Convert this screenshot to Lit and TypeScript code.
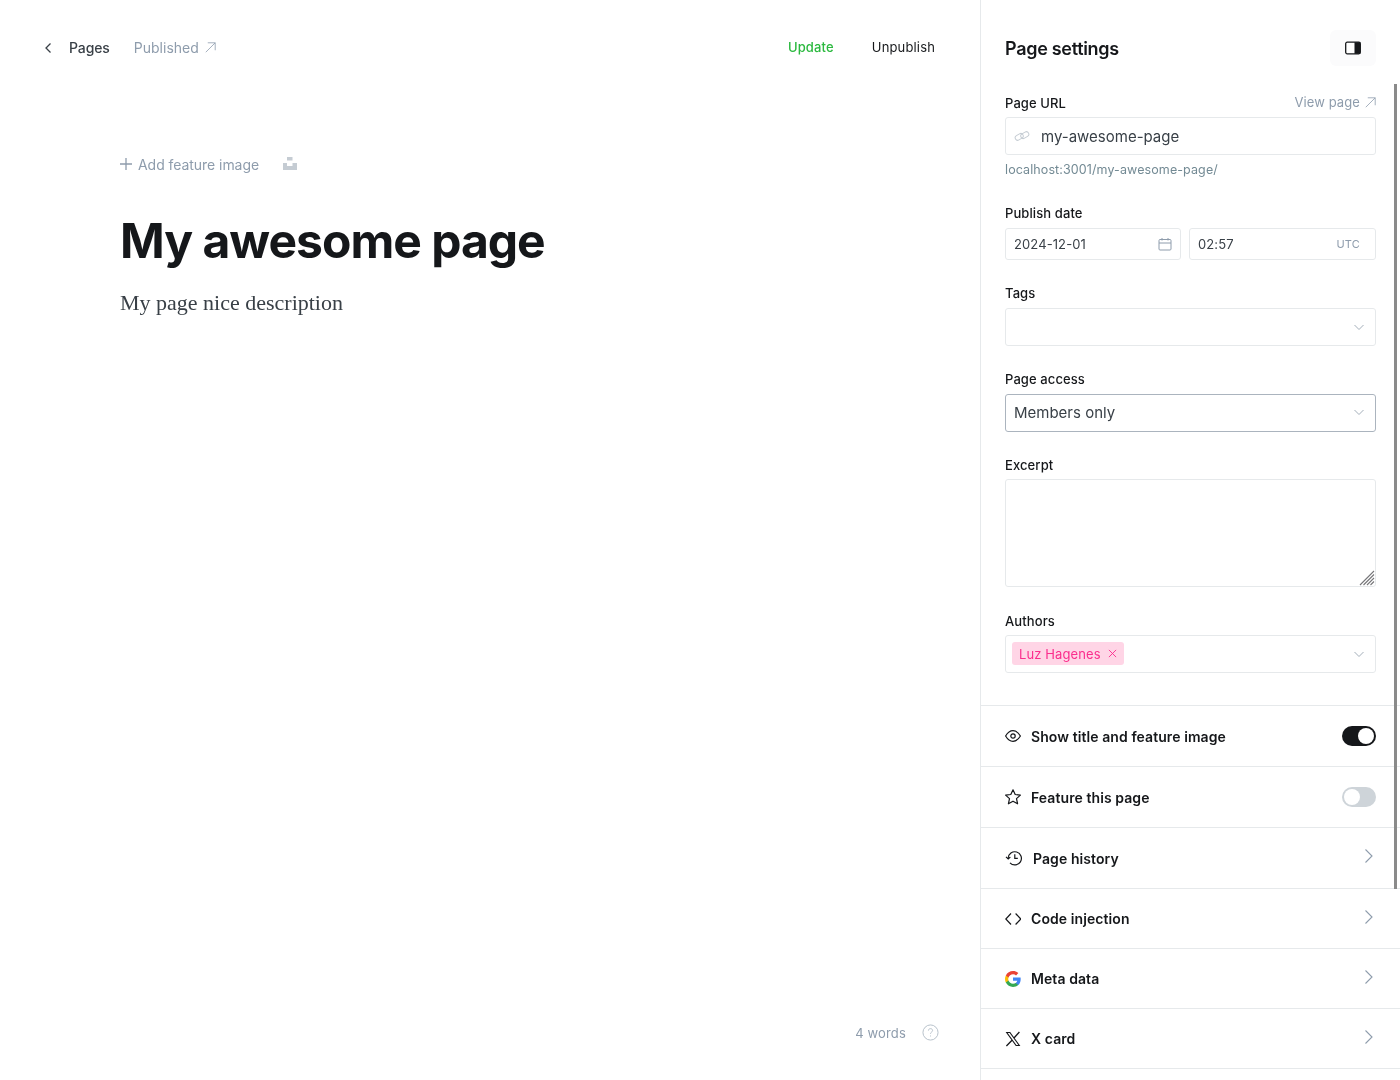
import { LitElement, css, html, svg } from 'lit';
import { customElement } from 'lit/decorators.js';

const arrowUpRight = svg`<path d="M1 13 L13 1 M3.5 1 H13 V10.5" fill="none" stroke="currentColor" stroke-width="1"/>`;
const chevronDown = html`<svg class="chev" viewBox="0 0 12 12" width="12" height="12"><path d="M1.5 4 L6 8.5 L10.5 4" fill="none" stroke="#a3aeb9" stroke-width="1"/></svg>`;
const chevronRight = html`<svg class="row-arrow" viewBox="0 0 10 16" width="10" height="16"><path d="M1.5 1.5 L8 8 L1.5 14.5" fill="none" stroke="#8e9cac" stroke-width="1.1"/></svg>`;

@customElement('app-root')
export class AppRoot extends LitElement {
  static styles = css`
:host {
  display: block;
  width: 1400px;
  height: 1080px;
  overflow: hidden;
  background: #fff;
  font-family: Inter, "Liberation Sans", sans-serif;
  color: #15171a;
}
.page {
  display: flex;
  height: 1080px;
  will-change: transform;
}
.editor {
  width: 980px;
  display: flex;
  flex-direction: column;
  position: relative;
}
.topbar {
  display: flex;
  align-items: center;
  height: 30px;
  margin-top: 32px;
  padding: 0 45px 0 44px;
  font-size: 14px;
}
.back {
  display: flex;
  align-items: center;
  color: #394047;
  font-weight: 500;
  gap: 17px;
  letter-spacing: -0.1px;
}
.back svg {
  margin-top: 1px;
}
.status {
  display: flex;
  align-items: center;
  color: #8e9cac;
  margin-left: 24px;
  gap: 6px;
}
.actions {
  margin-left: auto;
  display: flex;
  gap: 38px;
  font-size: 13px;
  letter-spacing: 0.15px;
}
.update {
  color: #2bb93f;
  font-weight: 500;
}
.unpublish {
  color: #15171a;
}
.content {
  padding: 0 120px;
}
.feature {
  display: flex;
  align-items: center;
  margin-top: 92px;
  height: 20px;
  color: #8e9cac;
  font-size: 14px;
  letter-spacing: -0.05px;
}
.feature .plus {
  margin-right: 6px;
}
.feature .unsplash {
  margin-left: 24px;
  margin-top: -1px;
}
h1 {
  margin: 37px 0 0;
  font-size: 48px;
  line-height: 60px;
  font-weight: 700;
  letter-spacing: -1px;
  color: #15171a;
}
.desc {
  margin: 17px 0 0;
  font-family: "Liberation Serif", serif;
  font-size: 22px;
  line-height: 30px;
  color: #394047;
}
.count {
  position: absolute;
  right: 41px;
  bottom: 39px;
  display: flex;
  align-items: center;
  gap: 16px;
  font-size: 13px;
  color: #8e9cac;
  letter-spacing: 0.15px;
}
.sidebar {
  width: 420px;
  box-sizing: border-box;
  border-left: 1px solid #e6e9eb;
  position: relative;
  overflow: hidden;
}
.scrollbar {
  position: absolute;
  right: 3px;
  top: 84px;
  width: 3px;
  height: 805px;
  background: #8a8a8a;
}
.side-head {
  display: flex;
  align-items: flex-start;
  justify-content: space-between;
  height: 93px;
  padding: 30px 24px 0;
  box-sizing: border-box;
}
.side-head h3 {
  margin: 0;
  font-size: 18px;
  line-height: 38px;
  font-weight: 600;
  letter-spacing: -0.3px;
}
.toggle-side {
  width: 46px;
  height: 36px;
  border-radius: 6px;
  background: #fbfbfc;
  display: flex;
  align-items: center;
  justify-content: center;
}
.form {
  padding: 0 24px 32px;
}
.field {
  margin-bottom: 23px;
}
.label-row {
  display: flex;
  justify-content: space-between;
  align-items: center;
  height: 20px;
  margin-bottom: 5px;
  font-size: 13px;
  font-weight: 500;
  letter-spacing: 0.1px;
  color: #15171a;
}
.view-page {
  display: flex;
  align-items: center;
  gap: 5px;
  font-weight: 400;
  color: #8e9cac;
  margin-top: -2px;
}
.input {
  display: flex;
  align-items: center;
  box-sizing: border-box;
  height: 38px;
  border: 1px solid #e6e9eb;
  border-radius: 3px;
  padding: 0 10px 0 8px;
  font-size: 15px;
  color: #394047;
}
.input.access {
  border-color: #abb4be;
  padding-bottom: 2px;
}
.input .chev {
  margin-left: auto;
}
.slug svg {
  margin-right: 11px;
}
.hint {
  margin-top: 7px;
  font-size: 12.5px;
  line-height: 16px;
  letter-spacing: 0.1px;
  color: #738a94;
}
.dates {
  display: flex;
  gap: 8px;
}
.dates .input {
  height: 32px;
  flex: 1 1 0;
  font-size: 13px;
  letter-spacing: 0.1px;
}
.dates .input.date {
  flex: 0 0 176px;
}
.date svg {
  margin-left: auto;
  margin-right: -2px;
}
.time .utc {
  margin-left: auto;
  margin-right: 5px;
  font-size: 11px;
  color: #8e9cac;
  letter-spacing: 0.2px;
}
.textarea {
  box-sizing: border-box;
  position: relative;
  height: 108px;
  border: 1px solid #e6e9eb;
  border-radius: 3px;
}
.grip {
  position: absolute;
  right: 0;
  bottom: 0;
}
.tag {
  display: flex;
  align-items: center;
  height: 23px;
  margin-left: -2px;
  margin-top: -1px;
  padding: 0 7px;
  gap: 7px;
  border-radius: 3px;
  background: #ffd5e6;
  color: #fb2d8d;
  font-size: 13px;
  letter-spacing: 0.1px;
}
.rows {
  border-top: 1px solid #e6e9eb;
}
.row {
  display: flex;
  align-items: center;
  box-sizing: border-box;
  border-bottom: 1px solid #e6e9eb;
  padding: 0 24px;
  font-size: 14px;
  font-weight: 600;
  color: #15171a;
  letter-spacing: 0.08px;
}
.row .ico {
  width: 16px;
  height: 16px;
  margin-right: 10px;
  flex: none;
}
.row .ico.history {
  width: 18px;
  height: 18px;
}
.row .row-arrow {
  margin-left: auto;
  margin-top: -4px;
  margin-right: 2px;
}
.switch {
  margin-left: auto;
  width: 34px;
  height: 20px;
  box-sizing: border-box;
  border-radius: 10px;
  padding: 2px;
  display: flex;
  background: #ced4d9;
}
.switch.on {
  background: #15171a;
  justify-content: flex-end;
}
.switch i {
  display: block;
  width: 16px;
  height: 16px;
  border-radius: 50%;
  background: #fff;
}
`;

  renderRow(height: number, icon: unknown, label: string, control: unknown) {
    return html`<div class="row" style="height:${height}px">${icon}<span>${label}</span>${control}</div>`;
  }

  render() {
    const rows = [
      { h: 61, label: 'Show title and feature image', control: html`<span class="switch on"><i></i></span>`, icon: html`<svg class="ico" viewBox="0 0 16 16"><path d="M.6 8 C2.6 4.6 5.2 2.6 8 2.6 S13.4 4.6 15.4 8 C13.4 11.4 10.8 13.4 8 13.4 S2.6 11.4 .6 8Z" fill="none" stroke="#15171a" stroke-width="1.2"/><circle cx="8" cy="8" r="2.2" fill="none" stroke="#15171a" stroke-width="1.2"/></svg>` },
      { h: 61, label: 'Feature this page', control: html`<span class="switch"><i></i></span>`, icon: html`<svg class="ico" viewBox="0 0 16 16"><path d="M8 .8 L10.2 5.5 L15.4 6.1 L11.5 9.6 L12.6 14.8 L8 12.2 L3.4 14.8 L4.5 9.6 L.6 6.1 L5.8 5.5Z" fill="none" stroke="#15171a" stroke-width="1.2" stroke-linejoin="round"/></svg>` },
      { h: 61, label: 'Page history', control: chevronRight, icon: html`<svg class="ico history" viewBox="0 0 18 18"><path d="M3.2 9.2 A6.6 6.6 0 1 1 5 13.9" fill="none" stroke="#15171a" stroke-width="1.2"/><path d="M1 7.8 L3.2 10 L5.3 8" fill="none" stroke="#15171a" stroke-width="1.2"/><path d="M9.8 5.3 V9.4 H12.8" fill="none" stroke="#15171a" stroke-width="1.2"/></svg>` },
      { h: 60, label: 'Code injection', control: chevronRight, icon: html`<svg class="ico" viewBox="0 0 16 16"><path d="M6 2.5 L.8 8 L6 13.5 M10.6 2.5 L15.8 8 L10.6 13.5" fill="none" stroke="#15171a" stroke-width="1.2"/></svg>` },
      { h: 60, label: 'Meta data', control: chevronRight, icon: html`<svg class="ico" viewBox="1 1 22 22"><path fill="#4285F4" d="M22.56 12.25c0-.78-.07-1.53-.2-2.25H12v4.26h5.92c-.26 1.37-1.04 2.53-2.21 3.31v2.77h3.57c2.08-1.92 3.28-4.74 3.28-8.09z"/><path fill="#34A853" d="M12 23c2.97 0 5.46-.98 7.28-2.66l-3.57-2.77c-.98.66-2.23 1.06-3.71 1.06-2.86 0-5.29-1.93-6.16-4.53H2.18v2.84C3.99 20.53 7.7 23 12 23z"/><path fill="#FBBC05" d="M5.84 14.09c-.22-.66-.35-1.36-.35-2.09s.13-1.43.35-2.09V7.07H2.18C1.43 8.55 1 10.22 1 12s.43 3.45 1.18 4.93l2.85-2.22.81-.62z"/><path fill="#EA4335" d="M12 5.38c1.62 0 3.06.56 4.21 1.64l3.15-3.15C17.45 2.09 14.97 1 12 1 7.7 1 3.99 3.47 2.18 7.07l3.66 2.84c.87-2.6 3.3-4.53 6.16-4.53z"/></svg>` },
      { h: 60, label: 'X card', control: chevronRight, icon: html`<svg class="ico" viewBox="0 0 16 16"><path d="M.6 1 H5.2 L15.4 15 H10.8Z M2.7 2 L11.4 14 H13.3 L4.6 2Z" fill="#15171a" fill-rule="evenodd"/><path d="M14.4 1 L9 7 M7 9.2 L1.4 15" fill="none" stroke="#15171a" stroke-width="1.3"/></svg>` },
    ];

    return html`
<div class="page">
  <div class="editor">
    <div class="topbar">
      <div class="back">
        <svg viewBox="0 0 8 12" width="8" height="12"><path d="M6.5 1.5 L2 6 L6.5 10.5" fill="none" stroke="#394047" stroke-width="1.3"/></svg>
        <span>Pages</span>
      </div>
      <div class="status">
        <span>Published</span>
        <svg viewBox="0 0 14 14" width="11" height="11">${arrowUpRight}</svg>
      </div>
      <div class="actions">
        <span class="update">Update</span>
        <span class="unpublish">Unpublish</span>
      </div>
    </div>
    <div class="content">
      <div class="feature">
        <svg class="plus" viewBox="0 0 12 12" width="12" height="12"><path d="M6 0 V12 M0 6 H12" stroke="#8e9cac" stroke-width="1.3"/></svg>
        <span>Add feature image</span>
        <svg class="unsplash" viewBox="0 0 14 13" width="14" height="13"><path d="M4 0 H9.5 V3.5 H4Z M0 6 H4 V9 H9.5 V6 H14 V13 H0Z" fill="#c5ccd3"/></svg>
      </div>
      <h1>My awesome page</h1>
      <p class="desc">My page nice description</p>
    </div>
    <div class="count">
      <span>4 words</span>
      <svg viewBox="0 0 18 18" width="17" height="17"><circle cx="9" cy="9" r="8" fill="none" stroke="#b4bec8" stroke-width="1"/><path d="M6.8 7 C6.8 5.6 7.8 4.9 9 4.9 C10.3 4.9 11.2 5.7 11.2 6.9 C11.2 8.5 9 8.6 9 10.4 M9 12.2 V13.2" fill="none" stroke="#b4bec8" stroke-width="1"/></svg>
    </div>
  </div>

  <div class="sidebar">
    <div class="scrollbar"></div>
    <div class="side-head">
      <h3>Page settings</h3>
      <div class="toggle-side">
        <svg viewBox="0 0 16 14" width="16" height="14"><rect x=".7" y="1.2" width="14.6" height="11.6" rx="1.5" fill="#fff" stroke="#15171a" stroke-width="1.3"/><rect x="9.5" y="1.2" width="5.8" height="11.6" fill="#15171a"/></svg>
      </div>
    </div>
    <div class="form">
      <div class="field" style="margin-bottom:25px">
        <div class="label-row" style="margin-bottom:4px"><span>Page URL</span>
          <span class="view-page">View page <svg viewBox="0 0 14 14" width="11" height="11">${arrowUpRight}</svg></span>
        </div>
        <div class="input slug">
          <svg viewBox="0 0 16 16" width="16" height="16"><g fill="none" stroke="#c5ccd3" stroke-width="1"><rect x="1" y="6.5" width="8.5" height="5" rx="2.5" transform="rotate(-30 5 9)"/><rect x="6.5" y="4.5" width="8.5" height="5" rx="2.5" transform="rotate(-30 11 7)"/></g></svg>
          <span>my-awesome-page</span>
        </div>
        <div class="hint">localhost:3001/my-awesome-page/</div>
      </div>
      <div class="field">
        <div class="label-row"><span>Publish date</span></div>
        <div class="dates">
          <div class="input date"><span>2024-12-01</span>
            <svg viewBox="0 0 14 14" width="14" height="14"><g fill="none" stroke="#8e9cac" stroke-width="1"><rect x="1" y="2.5" width="12" height="10.5" rx="1"/><path d="M1 6 H13 M4 1 V3.5 M10 1 V3.5"/></g></svg>
          </div>
          <div class="input time"><span>02:57</span><span class="utc">UTC</span></div>
        </div>
      </div>
      <div class="field">
        <div class="label-row"><span>Tags</span></div>
        <div class="input">${chevronDown}</div>
      </div>
      <div class="field">
        <div class="label-row"><span>Page access</span></div>
        <div class="input access"><span>Members only</span>${chevronDown}</div>
      </div>
      <div class="field" style="margin-bottom:24px">
        <div class="label-row" style="margin-bottom:4px"><span>Excerpt</span></div>
        <div class="textarea">
          <svg class="grip" viewBox="0 0 16 16" width="16" height="16"><path d="M15 1 L1 15 M15 4.5 L4.5 15 M15 8 L8 15 M15 11.5 L11.5 15" stroke="#77777a" stroke-width="1.1"/></svg>
        </div>
      </div>
      <div class="field" style="margin-bottom:0">
        <div class="label-row" style="margin-bottom:4px"><span>Authors</span></div>
        <div class="input">
          <span class="tag">Luz Hagenes
            <svg viewBox="0 0 10 10" width="9" height="9"><path d="M1 1 L9 9 M9 1 L1 9" stroke="#fb2d8d" stroke-width="1"/></svg>
          </span>
          ${chevronDown}
        </div>
      </div>
    </div>
    <div class="rows">
      ${rows.map((r) => this.renderRow(r.h, r.icon, r.label, r.control))}
    </div>
  </div>
</div>
`;
  }
}
